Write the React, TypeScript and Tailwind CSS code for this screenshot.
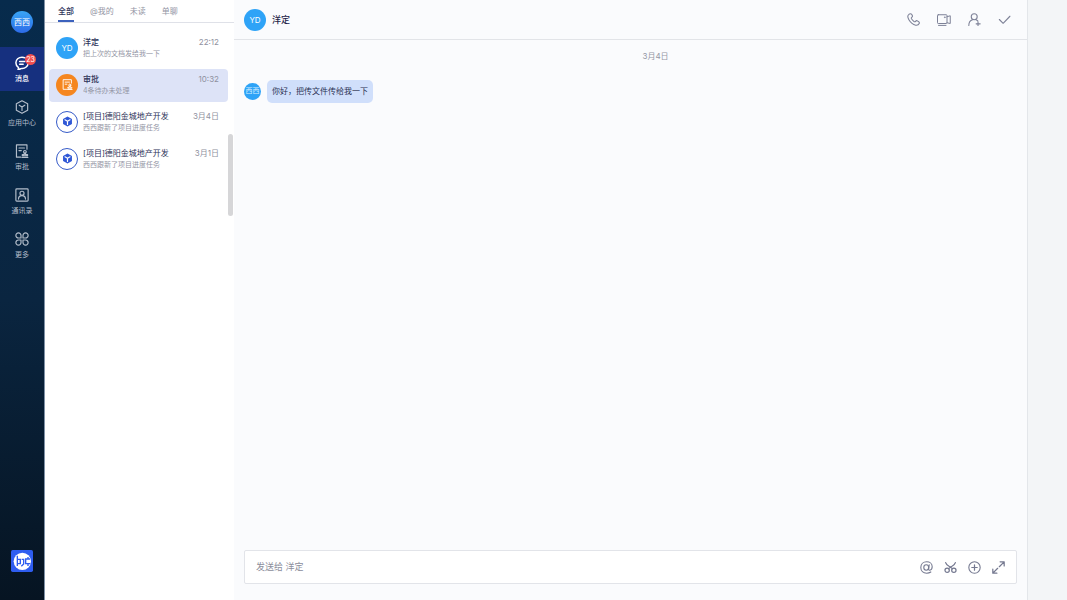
import type { ReactNode } from "react";
import clsx from "clsx";

type IconProps = { className?: string };

function Svg({ className, children, viewBox = "0 0 24 24" }: IconProps & { children: ReactNode; viewBox?: string }) {
  return (
    <svg
      viewBox={viewBox}
      className={className}
      fill="none"
      stroke="currentColor"
      strokeWidth="2"
      strokeLinecap="round"
      strokeLinejoin="round"
      aria-hidden="true"
    >
      {children}
    </svg>
  );
}

const ChatIcon = ({ className }: IconProps) => (
  <Svg className={className}>
    <path
      d="M22.6 12.5A10.3 9.6 0 0 1 12 21.3c-.8 0-1.3 0-2 .4-1.5 1-3 1.5-4.8 1.5.8-1.2 1-2.4.5-3.7A9.6 9.6 0 0 1 1.5 11.7C1.5 6 6.2 2 12 2c2 0 3.800.5 5.300 1.300"
      strokeWidth="2.6"
    />
    <path d="M8 9.5h9M8 14h6" strokeWidth="2.6" />
  </Svg>
);

const AppsIcon = ({ className }: IconProps) => (
  <Svg className={className}>
    <path d="M12 1.2 21.7 6.6v10.8L12 22.8 2.3 17.4V6.6Z" />
    <path d="m7.2 8.8 4.8 3 4.8-3M12 11.8v6" />
  </Svg>
);

const ApprovalIcon = ({ className }: IconProps) => (
  <Svg className={className}>
    <path d="M20.5 9V1.5h-18v21H10M6.8 6.8h9.4M6.8 11.3h4" />
    <circle cx="17" cy="13.4" r="2.3" />
    <path d="M16 15.8v2.4h-3.5v2h9v-2H18v-2.4M12 23h10" />
  </Svg>
);

const ContactsIcon = ({ className }: IconProps) => (
  <Svg className={className}>
    <rect x="1.5" y="1.5" width="21" height="21" rx="1.5" />
    <circle cx="12" cy="9" r="3.5" />
    <path d="M6 19c0-3.5 2-6 6-6s6 2.5 6 6" />
  </Svg>
);

const MoreIcon = ({ className }: IconProps) => (
  <Svg className={className}>
    <path d="M10.3 10.3H6a4.4 4.4 0 1 1 4.3-4.4ZM13.7 10.3V5.900a4.4 4.4 0 1 1 4.3 4.4ZM10.3 13.7v4.4A4.4 4.4 0 1 1 6 13.7ZM13.7 13.7H18a4.4 4.4 0 1 1-4.3 4.4Z" />
  </Svg>
);

const CubeIcon = ({ className }: IconProps) => (
  <Svg className={className}>
    <path d="M12 1 21.7 6.5v11L12 23l-9.7-5.5v-11Z" fill="currentColor" stroke="none" />
    <path d="m6.5 8.3 5.5 3.2 5.5-3.2M12 11.5v7" stroke="white" strokeWidth="2.6" />
  </Svg>
);

const PhoneIcon = ({ className }: IconProps) => (
  <Svg className={className}>
    <path d="M3.5 2.5C1 4.5.8 8 3.5 12.5c3 5 7.5 9 12.5 10 3 .5 5.5-.7 6.5-3 .6-1.4.2-2.7-1-3.5l-2.3-1.4c-1.3-.8-2.5-.4-3.4.7-.8 1-1.7 1-2.8.3-2-1.4-3.5-3-4.7-5-.6-1.1-.5-1.9.5-2.6 1.2-.8 1.6-1.9 1-3.2L8.500 2.500C7.500.8 5 .9 3.500 2.500Z" />
  </Svg>
);

const VideoIcon = ({ className }: IconProps) => (
  <Svg className={className} viewBox="0 0 28 24">
    <rect x="1" y="1.500" width="19" height="17.500" rx="1.500" />
    <path d="M3 22.800h15M20 5.500l6.500-2v15.500l-6.500-1.500" />
    <circle cx="15.500" cy="6.500" r="1" fill="currentColor" strokeWidth="1" />
  </Svg>
);

const AddUserIcon = ({ className }: IconProps) => (
  <Svg className={className}>
    <circle cx="11.5" cy="7" r="5.5" />
    <path d="M1.5 23c0-5.500 3-9.500 7-10.500M14.500 12.500c1.500.4 2.800 1.200 3.800 2.500M18.500 16.500v7M15 20h7.500" />
  </Svg>
);

const CheckIcon = ({ className }: IconProps) => (
  <Svg className={className}>
    <path d="m2.5 12 7 7L22 6" />
  </Svg>
);

const AtIcon = ({ className }: IconProps) => (
  <Svg className={className}>
    <ellipse cx="11.5" cy="12" rx="4.5" ry="5" />
    <path d="M17 7l-1 7.500c-.3 2 .6 2.800 2 2.500 2.800-.6 4.500-3.500 4.500-6.500 0-5.500-4.500-9-10.200-9C6 1.500 1.500 6 1.500 12S6 22.500 12.300 22.500c3 0 5.500-.8 7.700-2.300" />
  </Svg>
);

const ScissorsIcon = ({ className }: IconProps) => (
  <Svg className={className}>
    <circle cx="5.8" cy="17" r="4" strokeWidth="2.3" />
    <circle cx="18.2" cy="17" r="4" strokeWidth="2.3" />
    <path
      d="M3 3c1 4 4 5.500 7.500 7.500 2.500 1.500 4 2.500 5 3.500M21 3c-1 4-4 5.500-7.500 7.500-2.500 1.500-4 2.500-5 3.500"
      strokeWidth="2.3"
    />
  </Svg>
);

const PlusIcon = ({ className }: IconProps) => (
  <Svg className={className}>
    <circle cx="12" cy="12" r="10.5" />
    <path d="M12 7v10M7 12h10" strokeWidth="2.3" />
  </Svg>
);

const ExpandIcon = ({ className }: IconProps) => (
  <Svg className={className}>
    <path d="M15 1.5h7.5V9M22 2l-8.5 8.5M9 22.5H1.5V15M2 22l8.5-8.5" strokeWidth="2.3" />
  </Svg>
);

const Logo = ({ className }: IconProps) => (
  <svg viewBox="0 0 66 66" className={className} role="img" aria-label="Logo">
    <rect width="66" height="66" rx="5" fill="#2e5df0" />
    <circle cx="34" cy="34" r="26" fill="white" />
    <g fill="none" stroke="#2e5df0" strokeWidth="4">
      <path d="M19 17v31M19 28h9v13h-7" />
      <path d="M32 28h6v14l-7 7" />
      <path d="M57 27H44v14h14M51 21v7M51 40v8" />
    </g>
  </svg>
);

const navItems = [
  { label: "消息", Icon: ChatIcon, active: true, badge: 23 },
  { label: "应用中心", Icon: AppsIcon },
  { label: "审批", Icon: ApprovalIcon },
  { label: "通讯录", Icon: ContactsIcon },
  { label: "更多", Icon: MoreIcon },
];

const tabs = ["全部", "@我的", "未读", "单聊"];

const conversations = [
  { id: 1, kind: "user", title: "洋定", preview: "把上次的文档发给我一下", time: "22:12" },
  { id: 2, kind: "approval", title: "审批", preview: "4条待办未处理", time: "10:32", selected: true },
  { id: 3, kind: "project", title: "[项目]德阳金城地产开发", preview: "西西跟新了项目进度任务", time: "3月4日" },
  { id: 4, kind: "project", title: "[项目]德阳金城地产开发", preview: "西西跟新了项目进度任务", time: "3月1日" },
];

const callActions = [
  { label: "语音通话", Icon: PhoneIcon },
  { label: "视频通话", Icon: VideoIcon, wide: true },
  { label: "添加成员", Icon: AddUserIcon },
  { label: "完成", Icon: CheckIcon },
];

const inputActions = [
  { label: "提及", Icon: AtIcon },
  { label: "截图", Icon: ScissorsIcon },
  { label: "添加", Icon: PlusIcon },
  { label: "展开", Icon: ExpandIcon },
];

function ConversationAvatar({ kind }: { kind: string }) {
  const base = "flex size-[22px] shrink-0 items-center justify-center rounded-full";
  if (kind === "user") {
    return <span className={clsx(base, "bg-[#2ea3f7] text-[8px] text-white")}>YD</span>;
  }
  if (kind === "approval") {
    return (
      <span className={clsx(base, "bg-[#f5861f] text-white")}>
        <ApprovalIcon className="size-[11px]" />
      </span>
    );
  }
  return (
    <span className={clsx(base, "border border-[#365bc8] bg-white text-[#2f57d6]")}>
      <CubeIcon className="size-[11px]" />
    </span>
  );
}

function Sidebar() {
  return (
    <aside className="flex w-11 shrink-0 flex-col items-center bg-linear-to-b from-[#072b4c] via-[#0a2540] to-[#061422]">
      <div className="flex h-[47px] items-center pb-1">
        <span className="flex size-[22px] items-center justify-center rounded-full bg-linear-to-b from-[#3aa5f5] to-[#2e6be8] text-[8px] text-white">
          西西
        </span>
      </div>
      <nav className="flex w-full flex-col">
        {navItems.map(({ label, Icon, active, badge }) => (
          <button
            key={label}
            type="button"
            className={clsx(
              "flex h-11 flex-col items-center justify-center gap-1 pt-0.5 text-[7px] leading-[10px]",
              active ? "bg-[#16307f] font-medium text-white" : "text-[#b3bdca]",
            )}
          >
            <span className="relative">
              <Icon className="size-[14px]" />
              {badge && (
                <span className="absolute -top-0.5 left-2.5 flex h-[11px] w-[11px] items-center justify-center rounded-full bg-[#f04f50] text-[7px] font-normal">
                  {badge}
                </span>
              )}
            </span>
            {label}
          </button>
        ))}
      </nav>
      <Logo className="mt-auto mb-7 size-[22px]" />
    </aside>
  );
}

function ConversationList() {
  return (
    <section className="relative w-[190px] shrink-0 border-l border-[#7f91a6] bg-white">
      <div className="flex h-[23px] gap-4 border-b border-[#dfe1e8] pl-[13px] text-[8px]">
        {tabs.map((tab, i) => (
          <button
            key={tab}
            type="button"
            className={clsx(
              "border-b-2 pt-0.5",
              i === 0 ? "border-[#3c62bd] font-medium text-[#30375c]" : "border-transparent text-[#9496a5]",
            )}
          >
            {tab}
          </button>
        ))}
      </div>
      <ul className="flex flex-col gap-1 pt-[9px] pr-1.5 pl-1">
        {conversations.map((c) => (
          <li key={c.id}>
            <button
              type="button"
              className={clsx(
                "flex h-[33px] w-full items-center gap-[5px] rounded-sm pr-[9px] pb-0.5 pl-[7px] text-left",
                c.selected && "bg-[#dde3f7]",
              )}
            >
              <ConversationAvatar kind={c.kind} />
              <span className="min-w-0 flex-1">
                <span className="flex justify-between text-[8px] leading-[11px]">
                  <span className={clsx("text-[#2c3258]", c.kind !== "project" && "font-medium")}>{c.title}</span>
                  <span className="text-[#8f91a0]">{c.time}</span>
                </span>
                <span className="block truncate text-[7px] leading-[11px] text-[#9496a5]">{c.preview}</span>
              </span>
            </button>
          </li>
        ))}
      </ul>
      <div className="absolute top-[134px] right-px h-[82px] w-[5px] rounded-full bg-[#d6d6d8]" />
    </section>
  );
}

function ChatPanel() {
  return (
    <main className="flex min-w-0 flex-1 flex-col border-r border-[#e3e6ea] bg-[#fafbfd]">
      <header className="flex h-10 items-center border-b border-[#e2e4e8] px-2.5">
        <span className="flex size-[22px] items-center justify-center rounded-full bg-[#2ea3f7] text-[8px] text-white">
          YD
        </span>
        <h1 className="ml-1.5 text-[9px] font-medium text-[#1d2348]">洋定</h1>
        <div className="ml-auto flex items-center gap-[17px] pr-1.5 text-[#7d8197]">
          {callActions.map(({ label, Icon, wide }) => (
            <button key={label} type="button" aria-label={label}>
              <Icon className={wide ? "h-3 w-3.5" : "size-[13px]"} />
            </button>
          ))}
        </div>
      </header>

      <div className="flex-1 px-2.5 pt-2.5">
        <p className="pl-[50px] text-center text-[8px] leading-3 text-[#9496a5]">3月4日</p>
        <div className="mt-[18px] flex items-center gap-1.5">
          <span className="flex size-[17px] items-center justify-center rounded-full bg-[#2ea3f7] text-[7px] text-[#d5ecff]">
            西西
          </span>
          <p className="rounded-[5px] bg-[#d0dffb] px-[5px] py-1.5 text-[8px] leading-[11px] text-[#293052]">
            你好，把传文件传给我一下
          </p>
        </div>
      </div>

      <form className="mx-2.5 mb-4 flex h-[34px] items-center rounded-xs border border-[#e2e4e9] bg-white px-[11px]">
        <input
          type="text"
          aria-label="发送给 洋定"
          placeholder="发送给 洋定"
          className="min-w-0 flex-1 bg-transparent text-[9px] text-[#30375c] outline-none placeholder:text-[#8b8d9b]"
        />
        <div className="flex items-center gap-[11px] text-[#757990]">
          {inputActions.map(({ label, Icon }) => (
            <button key={label} type="button" aria-label={label}>
              <Icon className="size-[13px]" />
            </button>
          ))}
        </div>
      </form>
    </main>
  );
}

export default function App() {
  return (
    <div className="flex min-h-screen bg-[#f3f5f7] font-[Inter,'Noto_Sans_CJK_SC',sans-serif]">
      <Sidebar />
      <ConversationList />
      <ChatPanel />
      <div className="w-[39px] shrink-0" />
    </div>
  );
}
